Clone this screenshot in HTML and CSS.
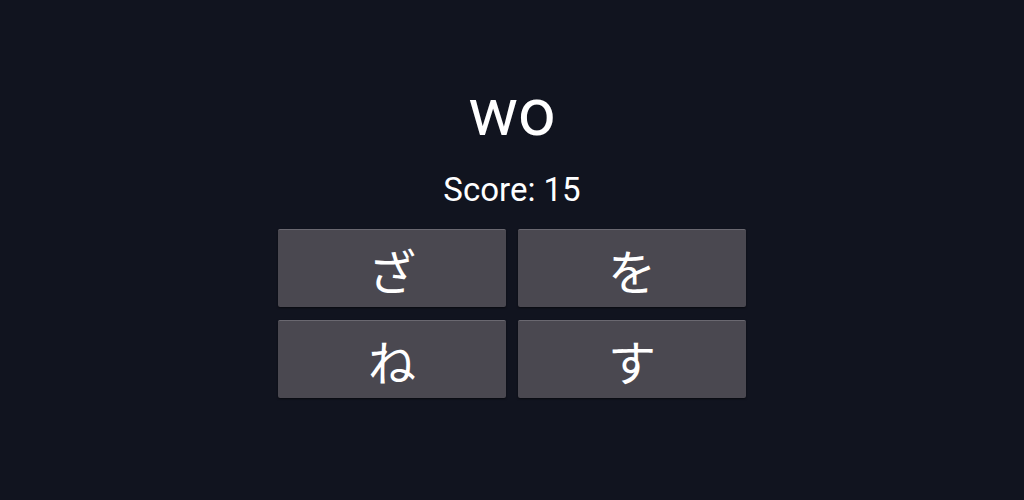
FILE: index.html
```html
<!DOCTYPE html>
<html lang="ja">
<head>
<meta charset="utf-8">
<link rel="stylesheet" href="styles.css">
</head>
<body>
<main class="game">
  <h1 class="romaji">wo</h1>
  <p class="score">Score: 15</p>
  <div class="choices">
    <button class="choice">ざ</button>
    <button class="choice">を</button>
    <button class="choice">ね</button>
    <button class="choice">す</button>
  </div>
</main>
</body>
</html>
```

FILE: styles.css
```css
html, body {
  margin: 0;
  height: 100%;
  background: #11141f;
}
body {
  font-family: Roboto, "Noto Sans CJK JP", sans-serif;
  color: #ffffff;
}
.game {
  display: flex;
  flex-direction: column;
  align-items: center;
  padding-top: 78px;
}
.romaji {
  margin: 0;
  font-size: 66px;
  font-weight: 400;
  line-height: 70px;
}
.score {
  margin: 24px 0 0;
  font-size: 33px;
  font-weight: 400;
  line-height: 36px;
}
.choices {
  margin-top: 21px;
  display: grid;
  grid-template-columns: 228px 228px;
  gap: 13px 12px;
}
.choice {
  height: 78px;
  border: none;
  border-top: 1px solid #6a6870;
  border-radius: 2px;
  background: #4a4850;
  color: #ffffff;
  font-family: "Noto Sans CJK JP", sans-serif;
  font-size: 48px;
  line-height: 1;
  box-shadow: 0 1px 2px rgba(0,0,0,0.5);
  padding: 0;
}
```
